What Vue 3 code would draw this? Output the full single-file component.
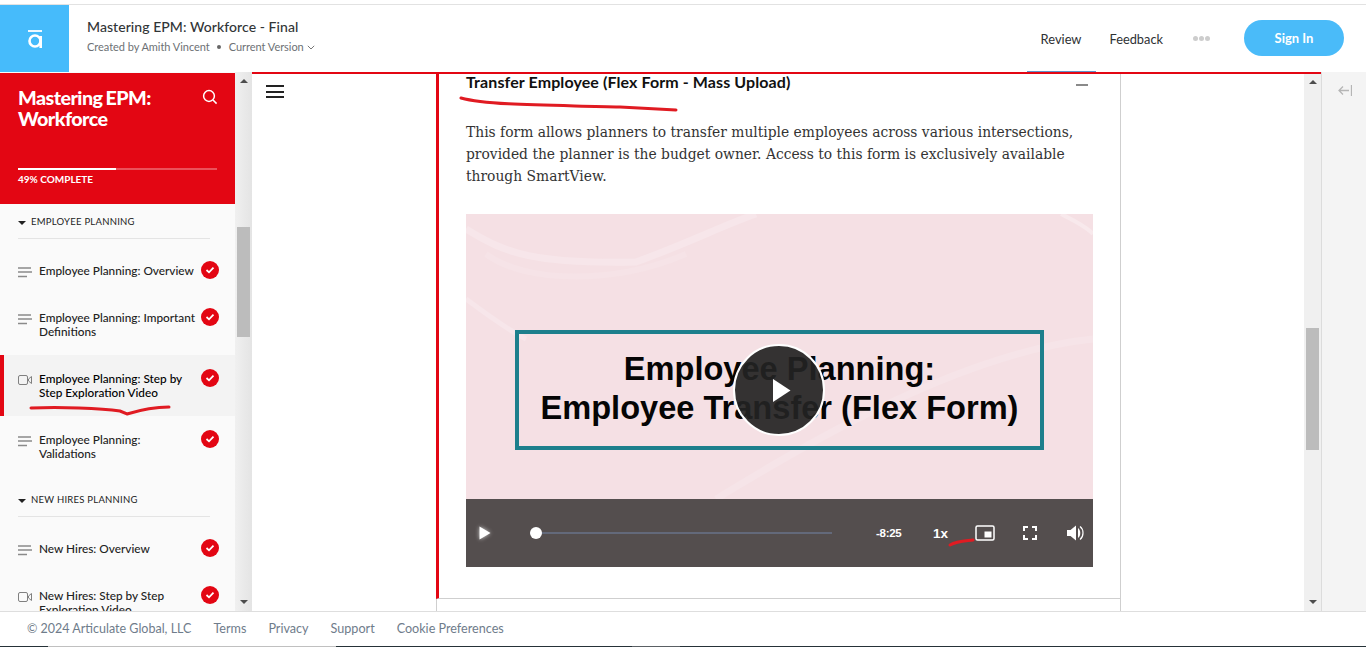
<script setup>
const sections = [
  { label: 'Employee Planning', items: [
    { t: 'Employee Planning: Overview', k: 'text' },
    { t: 'Employee Planning: Important Definitions', k: 'text' },
    { t: 'Employee Planning: Step by Step Exploration Video', k: 'video', active: true },
    { t: 'Employee Planning: Validations', k: 'text' },
  ]},
  { label: 'New Hires Planning', items: [
    { t: 'New Hires: Overview', k: 'text' },
    { t: 'New Hires: Step by Step Exploration Video', k: 'video' },
  ]},
]
</script>

<template>
  <div class="page">
    <header class="top">
      <div class="logo">
        <svg width="14" height="18" viewBox="0 0 14 18"><path d="M0 1h14" stroke="#fff" stroke-width="1.800" fill="none"/><circle cx="7" cy="11" r="5.500" stroke="#fff" stroke-width="2.600" fill="none"/><path d="M12.700 6v12" stroke="#fff" stroke-width="2.600" fill="none"/></svg>
      </div>
      <div class="meta">
        <div class="course">Mastering EPM: Workforce - Final</div>
        <div class="sub">
          <span>Created by Amith Vincent</span><i class="dot"></i><span>Current Version</span>
          <svg width="8" height="5" viewBox="0 0 8 5"><path d="M.8.8 4 4 7.200.8" stroke="#777" fill="none"/></svg>
        </div>
      </div>
      <nav class="tabs">
        <a class="tab review">Review</a>
        <a class="tab feedback">Feedback</a>
        <span class="more"><i></i><i></i><i></i></span>
        <button class="signin">Sign In</button>
      </nav>
    </header>

    <main class="main">
      <aside class="side">
        <div class="side-body">
          <div class="hero">
            <div class="hero-top">
              <h1>Mastering EPM: Workforce</h1>
              <svg width="16" height="16" viewBox="0 0 16 16"><circle cx="7" cy="7" r="5.400" stroke="#fff" stroke-width="1.500" fill="none"/><path d="m11 11 3.600 3.600" stroke="#fff" stroke-width="1.500"/></svg>
            </div>
            <div class="bar"><div class="fill"></div></div>
            <div class="pct">49% COMPLETE</div>
          </div>
          <div class="list">
            <section v-for="s in sections" :key="s.label" class="sec">
              <div class="sec-label"><i class="caret"></i>{{ s.label }}</div>
              <div v-for="it in s.items" :key="it.t" class="item" :class="{ active: it.active }">
                <svg v-if="it.k === 'text'" class="ico" width="14" height="11" viewBox="0 0 14 11"><path d="M0 1h13M0 5h14M0 9.500h9" stroke="#8a8a8a" stroke-width="1.500"/></svg>
                <svg v-else class="ico" width="14" height="11" viewBox="0 0 14 11"><rect x=".5" y=".5" width="9" height="9" rx="1.500" stroke="#808080" fill="none"/><path d="m13.500 1.500-3 2.500v2l3 2.500z" stroke="#808080" fill="none"/></svg>
                <span class="it-text">{{ it.t }}</span>
                <span class="check"><svg width="10" height="8" viewBox="0 0 10 8"><path d="m1.500 4 2.500 2.300 4.500-4.600" stroke="#fff" stroke-width="1.800" fill="none"/></svg></span>
              </div>
            </section>
          </div>
        </div>
        <div class="sb side-sb">
          <i class="up"></i><div class="thumb"></div><i class="down"></i>
        </div>
      </aside>

      <div class="stage">
        <div class="content">
          <div class="menu-col">
            <button class="burger"><i></i><i></i><i></i></button>
          </div>
          <div class="card-col">
            <article class="card">
              <div class="block-head">
                <h2>Transfer Employee (Flex Form - Mass Upload)</h2>
                <i class="minus"></i>
              </div>
              <p class="body">This form allows planners to transfer multiple employees across various intersections, provided the planner is the budget owner. Access to this form is exclusively available through SmartView.</p>
              <div class="video">
                <div class="poster">
                  <svg class="streaks" viewBox="0 0 627 285" preserveAspectRatio="none">
                    <path d="M0 15C40 40 70 50 170 48 220 30 260 10 290 0" stroke="#f7e6ea" stroke-width="7" fill="none"/>
                    <path d="M20 40C60 70 150 70 220 40" stroke="#f6e3e7" stroke-width="6" fill="none"/>
                    <path d="M0 85C20 100 40 115 60 125" stroke="#f7e6ea" stroke-width="5" fill="none"/>
                    <path d="M595 0C605 5 620 12 627 20" stroke="#f8e9ec" stroke-width="4" fill="none"/>
                    <path d="M250 285C300 255 480 140 627 125" stroke="#f6e4e8" stroke-width="7" fill="none"/>
                  </svg>
                  <div class="slide-box">
                    <div>Employee Planning:</div>
                    <div>Employee Transfer (Flex Form)</div>
                  </div>
                  <div class="bigplay"><svg width="18" height="23" viewBox="0 0 18 23"><path d="M0 0 17.500 11.500 0 23z" fill="#fff"/></svg></div>
                </div>
                <div class="controls">
                  <svg class="c-play" width="12" height="14" viewBox="0 0 12 14"><path d="M.5.500 11.500 7 .5 13.500z" fill="#fff"/></svg>
                  <div class="track"><i class="knob"></i></div>
                  <span class="time">-8:25</span>
                  <span class="speed">1x</span>
                  <svg class="c-ico pip" width="20" height="16" viewBox="0 0 20 16"><rect x="1" y="1" width="18" height="14" rx="1.500" stroke="#fff" stroke-width="1.500" fill="none"/><rect x="9.500" y="6.500" width="7" height="6" fill="#fff"/></svg>
                  <svg class="c-ico fs" width="14" height="14" viewBox="0 0 14 14"><path d="M1 5V1h4M9 1h4v4M13 9v4H9M5 13H1V9" stroke="#fff" stroke-width="2" fill="none"/></svg>
                  <svg class="c-ico vol" width="17" height="16" viewBox="0 0 17 16"><path d="M0 5h3.500L9 .5v15L3.500 11H0z" fill="#fff"/><path d="M11 3c3 2 3 8 0 10z" fill="#fff"/><path d="M13 1.500c4 3 4 10 0 13" stroke="#fff" stroke-width="1.200" fill="none"/></svg>
                </div>
              </div>
            </article>
            <div class="next-block"></div>
          </div>
        </div>
        <div class="sb main-sb">
          <i class="up"></i><div class="thumb"></div><i class="down"></i>
        </div>
      </div>
      <div class="rail">
        <svg width="14" height="11" viewBox="0 0 14 11"><path d="M11 5.500H1M5 1.500l-4 4 4 4M13.500 0v11" stroke="#b5b5b5" stroke-width="1.300" fill="none"/></svg>
      </div>

      <svg class="ink" width="1366" height="539" viewBox="0 72 1366 539">
        <path d="M461 98C490 106 560 105 620 107 640 108 660 109 676 110" class="pen"/>
        <path d="M31 408C60 407 100 408 120 411L127 414C140 410 155 407 169 407" class="pen"/>
        <path d="M950 545C957 541 965 541 973 540" class="pen"/>
      </svg>
    </main>

    <footer class="foot">
      <span class="copy">© 2024 Articulate Global, LLC</span>
      <a>Terms</a><a>Privacy</a><a>Support</a><a>Cookie Preferences</a>
    </footer>
  </div>
</template>

<style scoped>
.page { width: 1366px; height: 647px; display: flex; flex-direction: column; overflow: hidden; font-family: Lato, "Liberation Sans", sans-serif; background: #fff; box-sizing: border-box; padding-top: 4px; position: relative; }
.top { height: 68px; flex: none; display: flex; align-items: stretch; border-top: 1px solid #e2e2e2; box-sizing: border-box; }
.logo { width: 69px; background: #46bbfb; display: flex; align-items: center; justify-content: center; }
.meta { margin-left: 18px; padding-top: 13px; }
.course { font-size: 14px; line-height: 18px; color: #313537; font-weight: 500; letter-spacing: .06px; }
.sub { display: flex; align-items: center; margin-top: 4px; font-size: 11px; line-height: 14px; color: #6d7175; letter-spacing: -.04px; }
.dot { width: 4px; height: 4px; border-radius: 50%; background: #666; margin: 0 8px 0 7px; }
.sub svg { margin-left: 3px; }
.tabs { margin-left: auto; display: flex; align-items: center; padding-right: 22px; position: relative; }
.tab { font-size: 13px; color: #2e3133; }
.feedback { font-size: 12.800px; }
.review { margin-right: 28px; position: relative; font-size: 12.900px; }
.review::after { content: ""; position: absolute; left: -14px; right: -14px; bottom: -25px; height: 1px; background: #5d93c9; }
.more { display: flex; gap: 1px; margin: 0 34px 0 30px; }
.more i { width: 5px; height: 5px; border-radius: 50%; background: #cdcdcd; }
.signin { width: 100px; height: 36px; margin-top: -2px; border: 0; border-radius: 18px; background: #4abbf9; color: #fff; font: 700 13px Lato, sans-serif; }

.main { flex: 1; min-height: 0; display: flex; position: relative; }
.side { width: 252px; flex: none; display: flex; }
.side-body { width: 235px; background: #fafafa; overflow: hidden; padding-top: 1px; box-sizing: border-box; }
.hero { height: 131px; background: #e30613; padding: 14px 18px 0; box-sizing: border-box; color: #fff; }
.hero-top { display: flex; justify-content: space-between; height: 81px; }
.hero h1 { margin: 0; font-size: 19.700px; line-height: 21px; font-weight: 900; width: 160px; letter-spacing: -.55px; word-spacing: -1px; }
.hero-top svg { margin-top: 2px; margin-right: -1px; }
.bar { width: 199px; height: 2px; background: rgba(255,255,255,.3); }
.fill { width: 49%; height: 2px; background: #fff; }
.pct { font-size: 10px; font-weight: 700; line-height: 12px; margin-top: 3px; }
.sec { padding-top: 16px; }
.sec:first-child { padding-top: 11px; }
.sec-label { margin: 0 25px 8px 18px; height: 12px; padding: 1px 0 10px; border-bottom: 1px solid #e4e4e4; font-size: 9.500px; line-height: 12px; letter-spacing: .25px; text-transform: uppercase; color: #222; display: flex; align-items: center; box-sizing: content-box; }
.caret { width: 0; height: 0; border: 4px solid transparent; border-top: 4px solid #222; border-bottom: 0; margin: 2px 5px 0 0; }
.item { display: flex; align-items: flex-start; padding: 17px 16px 16px 18px; font-size: 11.800px; line-height: 14px; color: #222; font-weight: 500; position: relative; }
.item.active { background: #f3f3f3; color: #000; box-shadow: inset 4px 0 #e30613; }
.ico { flex: none; margin: 3px 7px 0 0; }
.it-text { flex: 1; min-width: 0; padding-right: 2px; }
.check { flex: none; width: 18px; height: 18px; border-radius: 50%; background: #e30613; display: flex; align-items: center; justify-content: center; margin: -3px 0 -1px; }

.sb { width: 17px; flex: none; background: #f0f0f0; position: relative; }
.sb .thumb { position: absolute; left: 2px; right: 2px; background: #bcbcbc; }
.side-sb { background: linear-gradient(90deg, #f0f0f0, #e4e4e4); }
.side-sb .thumb { top: 155px; height: 110px; }
.main-sb .thumb { top: 254px; height: 122px; }
.sb i { position: absolute; left: 50%; margin-left: -4px; width: 0; height: 0; border: 4px solid transparent; }
.up { top: 7px; border-bottom: 4px solid #4d4d4d !important; border-top: 0 !important; }
.down { bottom: 7px; border-top: 4px solid #4d4d4d !important; border-bottom: 0 !important; }
.main-sb .up { top: 6px; }

.stage { flex: 1; min-width: 0; border-top: 2px solid #e30613; display: flex; }
.content { flex: 1; min-width: 0; display: flex; }
.menu-col { width: 184px; flex: none; padding: 11px 0 0 14px; box-sizing: border-box; }
.burger { display: flex; flex-direction: column; gap: 3.500px; padding: 0; border: 0; background: none; width: 18px; }
.burger i { height: 2px; background: #222; display: block; }
.card-col { width: 685px; flex: none; display: flex; flex-direction: column; }
.card { height: 525px; flex: none; box-sizing: border-box; border-left: 3px solid #e30613; border-right: 1px solid #cfcfcf; border-bottom: 1px solid #cfcfcf; padding: 0 27px; }
.next-block { flex: 1; border-left: 1px solid #cfcfcf; border-right: 1px solid #cfcfcf; }
.block-head { display: flex; justify-content: space-between; align-items: flex-start; height: 47px; }
.block-head h2 { margin: -1px 0 0; font-size: 16px; line-height: 18px; font-weight: 700; color: #111; letter-spacing: .1px; }
.minus { width: 12px; height: 1.500px; background: #8a8a8a; margin: 10px 5px 0 0; }
.body { margin: 0; width: 627px; font-family: "DejaVu Serif", serif; font-size: 13.850px; line-height: 22px; color: #333; }
.video { margin-top: 27px; width: 627px; height: 353px; display: flex; flex-direction: column; }
.poster { height: 285px; background: #f5e0e4; position: relative; overflow: hidden; }
.streaks { position: absolute; inset: 0; width: 100%; height: 100%; }
.slide-box { position: absolute; left: 49px; top: 116px; width: 529px; height: 120px; box-sizing: border-box; border: 4px solid #1d7f8c; font-family: "Liberation Sans", sans-serif; font-weight: 700; font-size: 32.600px; line-height: 39px; color: #050505; text-align: center; padding-top: 15px; }
.bigplay { position: absolute; left: 267px; top: 130px; width: 92px; height: 92px; box-sizing: border-box; border: 2px solid #fff; border-radius: 50%; background: rgba(35,35,35,.92); display: flex; align-items: center; justify-content: center; padding-left: 5px; }
.controls { flex: 1; background: #544e4e; display: flex; align-items: center; padding: 0 0 0 13px; color: #fff; font-family: "Liberation Sans", sans-serif; }
.c-play { filter: drop-shadow(0 0 2px rgba(255,255,255,.7)); flex: none; }
.track { margin-left: 39px; width: 302px; height: 2px; background: #63697a; position: relative; flex: none; }
.knob { position: absolute; left: 0; top: -5px; width: 12px; height: 12px; border-radius: 50%; background: #fff; }
.time { margin-left: 44px; font-size: 11.500px; font-weight: 700; width: 25px; flex: none; letter-spacing: -.3px; }
.speed { margin-left: 32px; font-size: 13.500px; font-weight: 700; width: 15px; flex: none; }
.pip { margin-left: 27px; flex: none; }
.fs { margin-left: 28px; flex: none; }
.vol { margin-left: 30px; flex: none; }

.rail { width: 45px; flex: none; box-sizing: border-box; background: #f4f4f4; border-left: 1px solid #dcdcdc; display: flex; justify-content: center; padding: 13px 0 0 1px; align-items: flex-start; }
.ink { position: absolute; left: 0; top: 0; pointer-events: none; }
.pen { fill: none; stroke: #e01b22; stroke-width: 3px; stroke-linecap: round; }
.foot { height: 36px; flex: none; box-sizing: border-box; border-top: 1px solid #dedede; display: flex; align-items: center; padding: 0 0 3px 27px; font-size: 12.600px; color: #6f7c8b; background: #fff linear-gradient(90deg, #263238 48px, #c0c0c0 48px, #c0c0c0 336px, #263238 336px, #263238 632px, #5a6064 632px, #5a6064 680px, #263238 680px) left bottom / 100% 1px no-repeat; }
.copy { font-size: 12.500px; }
.foot a { margin-left: 22px; }
</style>

<style>
html, body { margin: 0; overflow: hidden; }
</style>
